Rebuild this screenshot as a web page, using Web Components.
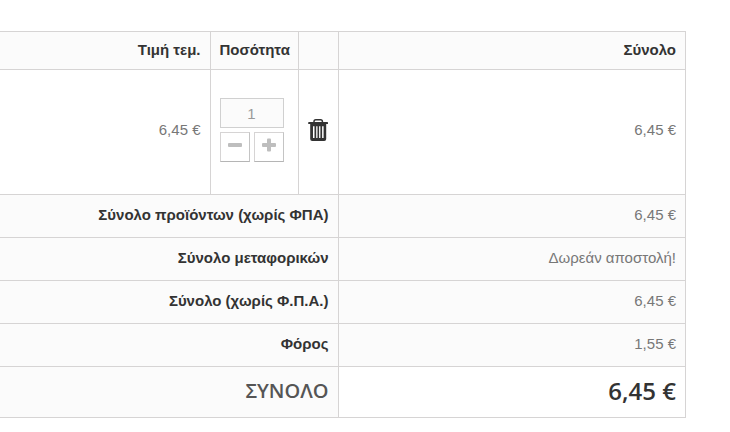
<!DOCTYPE html>
<html lang="el">
<head>
<meta charset="utf-8">
<title>Καλάθι</title>
<style>
  body {
    margin: 0;
    padding: 31px 44px 14px 0;
    background: #fff;
    color: #777;
    font: 15px/18px "Liberation Sans", Arial, sans-serif;
  }
</style>
</head>
<body>
<cart-summary>
  <span slot="price">6,45 €</span>
  <quantity-picker slot="quantity" value="1"></quantity-picker>
  <trash-button slot="remove"></trash-button>
  <span slot="line-total">6,45 €</span>
  <span slot="products">6,45 €</span>
  <span slot="shipping">Δωρεάν αποστολή!</span>
  <span slot="untaxed">6,45 €</span>
  <span slot="tax">1,55 €</span>
  <span slot="total">6,45 €</span>
</cart-summary>

<script>
'use strict';

customElements.define('quantity-picker', class extends HTMLElement {
  constructor() {
    super();

    this.root = this.attachShadow({mode: 'open'});

    this.root.innerHTML = `
      <style>
        :host {
          display: grid;
          grid-template-columns: 30px 30px;
          gap: 4px;
        }

        input {
          grid-column: 1 / -1;
          box-sizing: border-box;
          width: 100%;
          height: 30px;
          margin: 0;
          padding: 0;
          border: 1px solid #d0d0d0;
          border-radius: 0;
          background: #fbfbfb;
          color: #999;
          font: inherit;
          text-align: center;
        }

        button {
          display: flex;
          justify-content: center;
          height: 30px;
          padding: 5px 0 0;
          border: 1px solid;
          border-color: #d6d4d4 #c4c4c4 #b5b5b5 #d6d4d4;
          background: #fff;
          color: #bebebe;
          cursor: pointer;
        }
      </style>

      <input type="text" aria-label="Ποσότητα">
      <button type="button" class="down" aria-label="Μείωση">
        <svg width="14" height="14" viewBox="0 0 14 14" fill="currentColor">
          <rect y="5" width="14" height="4" rx="1"/>
        </svg>
      </button>
      <button type="button" class="up" aria-label="Αύξηση">
        <svg width="14" height="14" viewBox="0 0 14 14" fill="currentColor">
          <rect y="5" width="14" height="4" rx="1"/>
          <rect x="5" y="0.5" width="4" height="13" rx="1"/>
        </svg>
      </button>
    `;
  }

  connectedCallback() {
    const input = this.root.querySelector('input');
    input.value = this.getAttribute('value') || '1';

    this.root.querySelector('.down').addEventListener('click', () => {
      input.value = Math.max(1, Number(input.value) - 1);
    });

    this.root.querySelector('.up').addEventListener('click', () => {
      input.value = Number(input.value) + 1;
    });
  }
});

customElements.define('trash-button', class extends HTMLElement {
  constructor() {
    super();

    this.root = this.attachShadow({mode: 'open'});

    this.root.innerHTML = `
      <style>
        :host {
          display: flex;
          justify-content: center;
        }

        button {
          display: flex;
          padding: 0;
          border: 0;
          background: none;
          color: #333;
          cursor: pointer;
        }
      </style>

      <button type="button" aria-label="Διαγραφή">
        <svg width="20" height="22" viewBox="0 0 20 22" fill="currentColor">
          <path d="M6 3.5 V2.6 Q6 0.8 7.8 0.8 H12.6 Q14.4 0.8 14.4 2.6 V3.5" fill="none" stroke="currentColor" stroke-width="1.5"/>
          <rect x="0.2" y="3.1" width="19.8" height="1.9" rx="0.6"/>
          <path fill-rule="evenodd" d="M2.2 4.5 H18.2 V20 Q18.2 22 16.2 22 H4.2 Q2.2 22 2.2 20 Z
            M5 7.2 V19 H6.5 V7.2 Z M8.2 7.2 V19 H9.5 V7.2 Z
            M11.1 7.2 V19 H12.4 V7.2 Z M14.1 7.2 V19 H15.6 V7.2 Z"/>
        </svg>
      </button>
    `;
  }
});

customElements.define('cart-summary', class extends HTMLElement {
  constructor() {
    super();

    this.root = this.attachShadow({mode: 'open'});

    this.root.innerHTML = `
      <style>
        :host {
          display: block;
        }

        table {
          width: 100%;
          border-collapse: collapse;
          table-layout: fixed;
        }

        .unit {
          width: 210px;
        }

        .quantity {
          width: 88px;
        }

        .remove {
          width: 40px;
        }

        th,
        td {
          padding: 9px;
          border: 1px solid #d6d4d4;
          text-align: right;
        }

        th:first-child,
        td:first-child {
          border-left: 0;
        }

        th {
          color: #333;
          font-weight: bold;
        }

        thead th,
        thead td {
          padding-bottom: 10px;
          background: #fbfbfb;
          white-space: nowrap;
        }

        tbody td {
          height: 106px;
          padding: 7px 9px 11px;
        }

        tbody .icon {
          padding: 7px 0 11px;
        }

        tfoot th,
        tfoot td {
          padding: 11px 9px 13px;
          background: #fbfbfb;
        }

        tfoot .grand th,
        tfoot .grand td {
          padding: 9px 9px 11px;
          font: 600 20px/30px "Open Sans", sans-serif;
        }

        tfoot .grand th {
          color: #555;
        }

        tfoot .grand td {
          background: #fff;
          color: #333;
          font-size: 24px;
        }
      </style>

      <table>
        <colgroup>
          <col class="unit">
          <col class="quantity">
          <col class="remove">
          <col>
        </colgroup>
        <thead>
          <tr>
            <th scope="col">Τιμή τεμ.</th>
            <th scope="col">Ποσότητα</th>
            <td></td>
            <th scope="col">Σύνολο</th>
          </tr>
        </thead>
        <tbody>
          <tr>
            <td><slot name="price"></slot></td>
            <td><slot name="quantity"></slot></td>
            <td class="icon"><slot name="remove"></slot></td>
            <td><slot name="line-total"></slot></td>
          </tr>
        </tbody>
        <tfoot>
          <tr>
            <th scope="row" colspan="3">Σύνολο προϊόντων (χωρίς ΦΠΑ)</th>
            <td><slot name="products"></slot></td>
          </tr>
          <tr>
            <th scope="row" colspan="3">Σύνολο μεταφορικών</th>
            <td><slot name="shipping"></slot></td>
          </tr>
          <tr>
            <th scope="row" colspan="3">Σύνολο (χωρίς Φ.Π.Α.)</th>
            <td><slot name="untaxed"></slot></td>
          </tr>
          <tr>
            <th scope="row" colspan="3">Φόρος</th>
            <td><slot name="tax"></slot></td>
          </tr>
          <tr class="grand">
            <th scope="row" colspan="3">ΣΥΝΟΛΟ</th>
            <td><slot name="total"></slot></td>
          </tr>
        </tfoot>
      </table>
    `;
  }
});
</script>
</body>
</html>
